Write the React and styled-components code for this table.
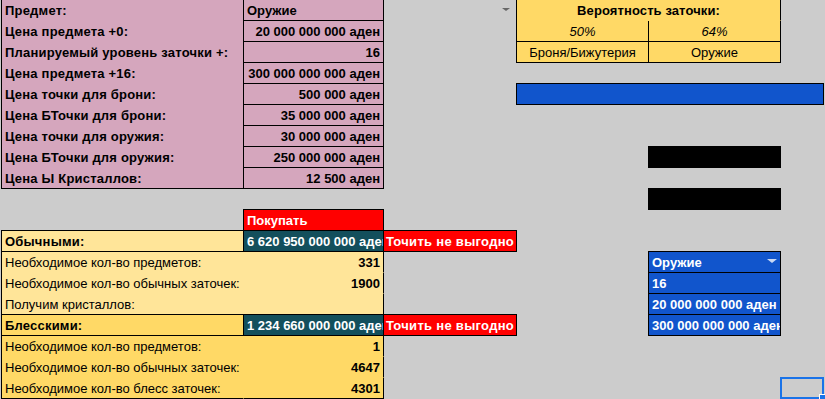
import React from 'react';
import styled, { createGlobalStyle } from 'styled-components';

const GlobalStyle = createGlobalStyle`
  html, body {
    margin: 0;
    padding: 0;
    background: #cccccc;
  }
  body {
    font-family: "Liberation Sans", Arial, sans-serif;
    overflow: hidden;
  }
`;

const LINE = '#000';
const PINK = '#d5a6bd';
const GOLD = '#ffd966';
const CREAM = '#ffe599';
const RED = '#ff0000';
const TEAL = '#134f5c';
const BLUE = '#1155cc';

const Sheet = styled.div`
  display: grid;
  grid-template-columns: 2px 242px 140px 133px 132px 132px 43px 1fr;
  grid-template-rows: repeat(19, 21px);
  width: 825px;
  height: 399px;
  background: #cccccc;
  overflow: hidden;
  font-size: 13px;
`;

const shadow = ({ $t, $l }) =>
  [$l && `-1px 0 0 ${LINE}`, $t && `0 -1px 0 ${LINE}`, $t && $l && `-1px -1px 0 ${LINE}`]
    .filter(Boolean)
    .join(', ') || 'none';

const Cell = styled.div`
  grid-column: ${p => p.$col};
  grid-row: ${p => p.$row};
  display: flex;
  align-items: flex-end;
  justify-content: ${p =>
    p.$align === 'right' ? 'flex-end' : p.$align === 'center' ? 'center' : 'flex-start'};
  box-sizing: border-box;
  padding: 0 3px 2px 3px;
  background: ${p => p.$bg || 'transparent'};
  color: ${p => p.$color || '#000'};
  font-weight: ${p => (p.$bold ? 700 : 400)};
  font-style: ${p => (p.$italic ? 'italic' : 'normal')};
  letter-spacing: ${p => p.$track || 0}px;
  line-height: 15px;
  white-space: nowrap;
  overflow: hidden;
  border-right: 1px solid ${p => (p.$r ? LINE : 'transparent')};
  border-bottom: 1px solid ${p => (p.$b ? LINE : 'transparent')};
  box-shadow: ${shadow};
`;

const Caret = styled.span`
  align-self: center;
  margin-left: auto;
  margin-right: ${p => p.$gap || 0}px;
  width: 0;
  height: 0;
  border-left: ${p => p.$size}px solid transparent;
  border-right: ${p => p.$size}px solid transparent;
  border-top: ${p => p.$size - 1}px solid ${p => p.$color};
`;

const Selection = styled.div`
  grid-column: 7;
  grid-row: 19;
  margin: -1px 0 0 -1px;
  box-sizing: border-box;
  border: 2px solid #1a73e8;
  position: relative;
`;

const Handle = styled.span`
  position: absolute;
  right: -4px;
  bottom: -4px;
  width: 6px;
  height: 6px;
  background: #1a73e8;
  border-top: 1px solid #fff;
  border-left: 1px solid #fff;
`;

const inputs = [
  ['Предмет:', 'Оружие'],
  ['Цена предмета +0:', '20 000 000 000 аден'],
  ['Планируемый уровень заточки +:', '16'],
  ['Цена предмета +16:', '300 000 000 000 аден'],
  ['Цена точки для брони:', '500 000 аден'],
  ['Цена БТочки для брони:', '35 000 000 аден'],
  ['Цена точки для оружия:', '30 000 000 аден'],
  ['Цена БТочки для оружия:', '250 000 000 аден'],
  ['Цена Ы Кристаллов:', '12 500 аден'],
];

const box = { $t: true, $l: true, $r: true, $b: true };

function InputRows() {
  return inputs.map(([label, value], i) => {
    const last = i === inputs.length - 1;
    return (
      <React.Fragment key={label}>
        <Cell $col={2} $row={i + 1} $bg={PINK} $bold $track={0.2} $l $r $b={last}>{label}</Cell>
        <Cell $col={3} $row={i + 1} $bg={PINK} $bold $align={i === 0 ? 'left' : 'right'} {...box}>
          {value}
        </Cell>
        {i === 0 && (
          <Cell $col={4} $row={1}>
            <Caret $size={4} $gap={3} $color="#666" />
          </Cell>
        )}
        {i === 0 && (
          <Cell $col="5 / 7" $row={1} $bg={GOLD} $bold $track={0.1} $align="center" $l $r>
            Вероятность заточки:
          </Cell>
        )}
        {i === 1 && (
          <>
            <Cell $col={5} $row={2} $bg={GOLD} $italic $align="center" $l $r $b>50%</Cell>
            <Cell $col={6} $row={2} $bg={GOLD} $italic $align="center" $r $b>64%</Cell>
          </>
        )}
        {i === 2 && (
          <>
            <Cell $col={5} $row={3} $bg={GOLD} $align="center" {...box}>Броня/Бижутерия</Cell>
            <Cell $col={6} $row={3} $bg={GOLD} $align="center" {...box}>Оружие</Cell>
          </>
        )}
        {i === 4 && <Cell $col="5 / 8" $row={5} $bg={BLUE} {...box} />}
        {i === 7 && <Cell $col={6} $row={8} $bg="#000" {...box} />}
      </React.Fragment>
    );
  });
}

function Verdict({ row, label, total, bg }) {
  return (
    <>
      <Cell $col={2} $row={row} $bg={bg} $bold $track={0.2} {...box}>{label}</Cell>
      <Cell $col={3} $row={row} $bg={TEAL} $color="#fff" $bold {...box}>{total}</Cell>
      <Cell $col={4} $row={row} $bg={RED} $color="#fff" $bold $track={0.3} $align="center" {...box}>
        Точить не выгодно
      </Cell>
    </>
  );
}

function Detail({ row, label, value, bg, last, side }) {
  return (
    <>
      <Cell $col={2} $row={row} $bg={bg} $l $b={last}>{label}</Cell>
      <Cell $col={3} $row={row} $bg={bg} $bold $align="right" $r $b={last}>{value}</Cell>
      {side}
    </>
  );
}

const sideCell = (row, text, caret) => (
  <Cell $col={6} $row={row} $bg={BLUE} $color="#fff" $bold {...box}>
    {text}
    {caret && <Caret $size={5} $color="rgba(255,255,255,0.78)" />}
  </Cell>
);

export default function App() {
  return (
    <>
      <GlobalStyle />
      <Sheet>
        <InputRows />
        <Cell $col={6} $row={10} $bg="#000" {...box} />
        <Cell $col={3} $row={11} $bg={RED} $color="#fff" $bold {...box}>Покупать</Cell>
        <Verdict row={12} label="Обычными:" total="6 620 950 000 000 аден" bg={CREAM} />
        <Detail row={13} label="Необходимое кол-во предметов:" value="331" bg={CREAM}
          side={sideCell(13, 'Оружие', true)} />
        <Detail row={14} label="Необходимое кол-во обычных заточек:" value="1900" bg={CREAM}
          side={sideCell(14, '16')} />
        <Detail row={15} label="Получим кристаллов:" value="" bg={CREAM} last
          side={sideCell(15, '20 000 000 000 аден')} />
        <Verdict row={16} label="Блесскими:" total="1 234 660 000 000 аден" bg={GOLD} />
        {sideCell(16, '300 000 000 000 аден')}
        <Detail row={17} label="Необходимое кол-во предметов:" value="1" bg={GOLD} />
        <Detail row={18} label="Необходимое кол-во обычных заточек:" value="4647" bg={GOLD} />
        <Detail row={19} label="Необходимое кол-во блесс заточек:" value="4301" bg={GOLD} last />
        <Selection>
          <Handle />
        </Selection>
      </Sheet>
    </>
  );
}
